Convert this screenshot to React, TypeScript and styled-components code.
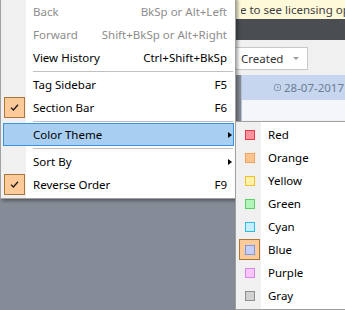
import React from "react";
import styled, { createGlobalStyle, css } from "styled-components";

const FONT = `"Noto Sans", "Open Sans", "Liberation Sans", sans-serif`;

const Global = createGlobalStyle`
  html, body { margin: 0; padding: 0; }
  body { width: 345px; height: 310px; overflow: hidden; background: #858b97; font-family: ${FONT}; }
`;

const Screen = styled.div`
  position: relative;
  width: 345px;
  height: 310px;
  overflow: hidden;
  display: flex;
  flex-direction: column;
  background: #858b97;
  font-family: ${FONT};
`;

const Banner = styled.div`
  height: 19px;
  flex: none;
  background: #fdf9d9;
  display: flex;
  padding-left: 241px;
  overflow: hidden;
`;

const BannerText = styled.span`
  color: #404040;
  font-size: 11.5px;
  line-height: 19px;
  white-space: nowrap;
  clip-path: inset(0 0 0 0);
  overflow: hidden;
  flex: 1;
  min-width: 0;
  text-indent: -47px;
`;

const DarkBar = styled.div`
  height: 21px;
  flex: none;
  background: #4a4d52;
`;

const Toolbar = styled.div`
  height: 35px;
  flex: none;
  box-sizing: border-box;
  background: #f0f0f0;
  display: flex;
  align-items: flex-start;
  padding: 7px 0 0 235px;
`;

const Combo = styled.div`
  width: 73px;
  height: 23px;
  box-sizing: border-box;
  border: 1px solid #c8c8c8;
  background: #fff;
  display: flex;
  align-items: center;
  justify-content: space-between;
  padding: 0 8px 0 5px;
  font-size: 11.5px;
  color: #333;
`;

const ComboArrow = styled.span`
  width: 0;
  height: 0;
  border-left: 3px solid transparent;
  border-right: 3px solid transparent;
  border-top: 3px solid #9a9a9a;
`;

const ListPanel = styled.div`
  margin-left: 241px;
  flex: none;
  border-left: 1px solid #b7c3d5;
  background: #f4f6fa;
  display: flex;
  flex-direction: column;
`;

const ListRow = styled.div`
  height: 25px;
  background: #c5d6ee;
  display: flex;
  align-items: center;
  gap: 3px;
  padding-left: 32px;
  font-size: 11.5px;
  color: #6d7c93;
  white-space: nowrap;
`;

const ListBlank = styled.div`
  height: 22px;
`;

const MenuBox = styled.div`
  position: absolute;
  box-sizing: border-box;
  border: 1px solid #a0a0a0;
  background: linear-gradient(to right, #f0f0f0 0, #f0f0f0 25px, #ffffff 25px);
  box-shadow: 2px 2px 3px rgba(0, 0, 0, 0.35);
  padding: 0 1px 2px 2px;
  display: flex;
  flex-direction: column;
  font-family: ${FONT};
  font-size: 11.5px;
`;

const MainMenu = styled(MenuBox)`
  left: 0;
  top: -3px;
  width: 236px;
  padding-top: 2px;
`;

const SubMenu = styled(MenuBox)`
  left: 235px;
  top: 121px;
  width: 130px;
  padding-top: 1px;
`;

const Item = styled.div<{ $active?: boolean; $disabled?: boolean }>`
  height: 23px;
  box-sizing: border-box;
  border: 1px solid transparent;
  display: grid;
  grid-template-columns: 21px 1fr auto 6px;
  align-items: center;
  color: ${(p) => (p.$disabled ? "#8d8d8d" : "#000")};
  white-space: nowrap;
  ${(p) =>
    p.$active &&
    css`
      background: #a8cef2;
      border-color: #3f8fdf;
    `}
`;

const Gutter = styled.span`
  width: 21px;
  height: 21px;
  display: flex;
  align-items: center;
  justify-content: center;
`;

const CheckBox = styled(Gutter)`
  box-sizing: border-box;
  border: 1px solid #a9773c;
  background: #fdcb9a;
`;

const Swatch = styled.span<{ $fill: string; $edge: string }>`
  width: 10px;
  height: 10px;
  box-sizing: border-box;
  border: 1px solid ${(p) => p.$edge};
  background: ${(p) => p.$fill};
`;

const Label = styled.span`
  padding-left: 8px;
`;

const Shortcut = styled.span`
  text-align: right;
`;

const Arrow = styled.span`
  width: 0;
  height: 0;
  margin-left: 1px;
  border-left: 4px solid #000;
  border-top: 3.5px solid transparent;
  border-bottom: 3.5px solid transparent;
`;

const Rule = styled.div`
  height: 1px;
  margin: 2px 1px 1px 30px;
  background: #c0c0c0;
`;

const Check = () => (
  <svg width="9" height="9" viewBox="0 0 9 9">
    <polyline points="1,4.6 3.4,7 8,1.8" fill="none" stroke="#1a1a1a" strokeWidth="1.3" />
  </svg>
);

const Clock = () => (
  <svg width="7" height="7" viewBox="0 0 7 7">
    <rect x="0.5" y="0.5" width="6" height="6" rx="1.5" fill="none" stroke="#8e9bb0" strokeWidth="1" />
    <polyline points="3.5,1.8 3.5,3.7 5,3.7" fill="none" stroke="#8e9bb0" strokeWidth="0.9" />
  </svg>
);

type Entry =
  | { kind: "sep" }
  | {
      kind: "item";
      label: string;
      shortcut?: string;
      checked?: boolean;
      disabled?: boolean;
      submenu?: boolean;
      active?: boolean;
    };

const mainEntries: Entry[] = [
  { kind: "item", label: "Back", shortcut: "BkSp or Alt+Left", disabled: true },
  { kind: "item", label: "Forward", shortcut: "Shift+BkSp or Alt+Right", disabled: true },
  { kind: "item", label: "View History", shortcut: "Ctrl+Shift+BkSp" },
  { kind: "sep" },
  { kind: "item", label: "Tag Sidebar", shortcut: "F5" },
  { kind: "item", label: "Section Bar", shortcut: "F6", checked: true },
  { kind: "sep" },
  { kind: "item", label: "Color Theme", submenu: true, active: true },
  { kind: "sep" },
  { kind: "item", label: "Sort By", submenu: true },
  { kind: "item", label: "Reverse Order", shortcut: "F9", checked: true },
];

const themes = [
  { label: "Red", fill: "#ff939b", edge: "#e8394a" },
  { label: "Orange", fill: "#fdc48e", edge: "#f5a25a" },
  { label: "Yellow", fill: "#fff1a8", edge: "#f2c22a" },
  { label: "Green", fill: "#b3f5b9", edge: "#5dcd6c" },
  { label: "Cyan", fill: "#c7eefc", edge: "#2bbce9" },
  { label: "Blue", fill: "#c3cffd", edge: "#7f98e8", checked: true },
  { label: "Purple", fill: "#f9c6fb", edge: "#d98ae6" },
  { label: "Gray", fill: "#d2d2d2", edge: "#8e8e8e" },
];

export default function App() {
  return (
    <>
      <Global />
      <Screen>
        <Banner>
          <BannerText>Click here to see licensing options</BannerText>
        </Banner>
        <DarkBar />
        <Toolbar>
          <Combo>
            <span>Created</span>
            <ComboArrow />
          </Combo>
        </Toolbar>
        <ListPanel>
          <ListRow>
            <Clock />
            <span>28-07-2017</span>
          </ListRow>
          <ListBlank />
        </ListPanel>

        <MainMenu>
          {mainEntries.map((e, i) =>
            e.kind === "sep" ? (
              <Rule key={i} />
            ) : (
              <Item key={i} $active={e.active} $disabled={e.disabled}>
                {e.checked ? (
                  <CheckBox>
                    <Check />
                  </CheckBox>
                ) : (
                  <Gutter />
                )}
                <Label>{e.label}</Label>
                <Shortcut>{e.shortcut ?? ""}</Shortcut>
                {e.submenu ? <Arrow /> : <span />}
              </Item>
            )
          )}
        </MainMenu>

        <SubMenu>
          {themes.map((t) => (
            <Item key={t.label}>
              {t.checked ? (
                <CheckBox>
                  <Swatch $fill={t.fill} $edge={t.edge} />
                </CheckBox>
              ) : (
                <Gutter>
                  <Swatch $fill={t.fill} $edge={t.edge} />
                </Gutter>
              )}
              <Label>{t.label}</Label>
              <Shortcut />
              <span />
            </Item>
          ))}
        </SubMenu>
      </Screen>
    </>
  );
}
